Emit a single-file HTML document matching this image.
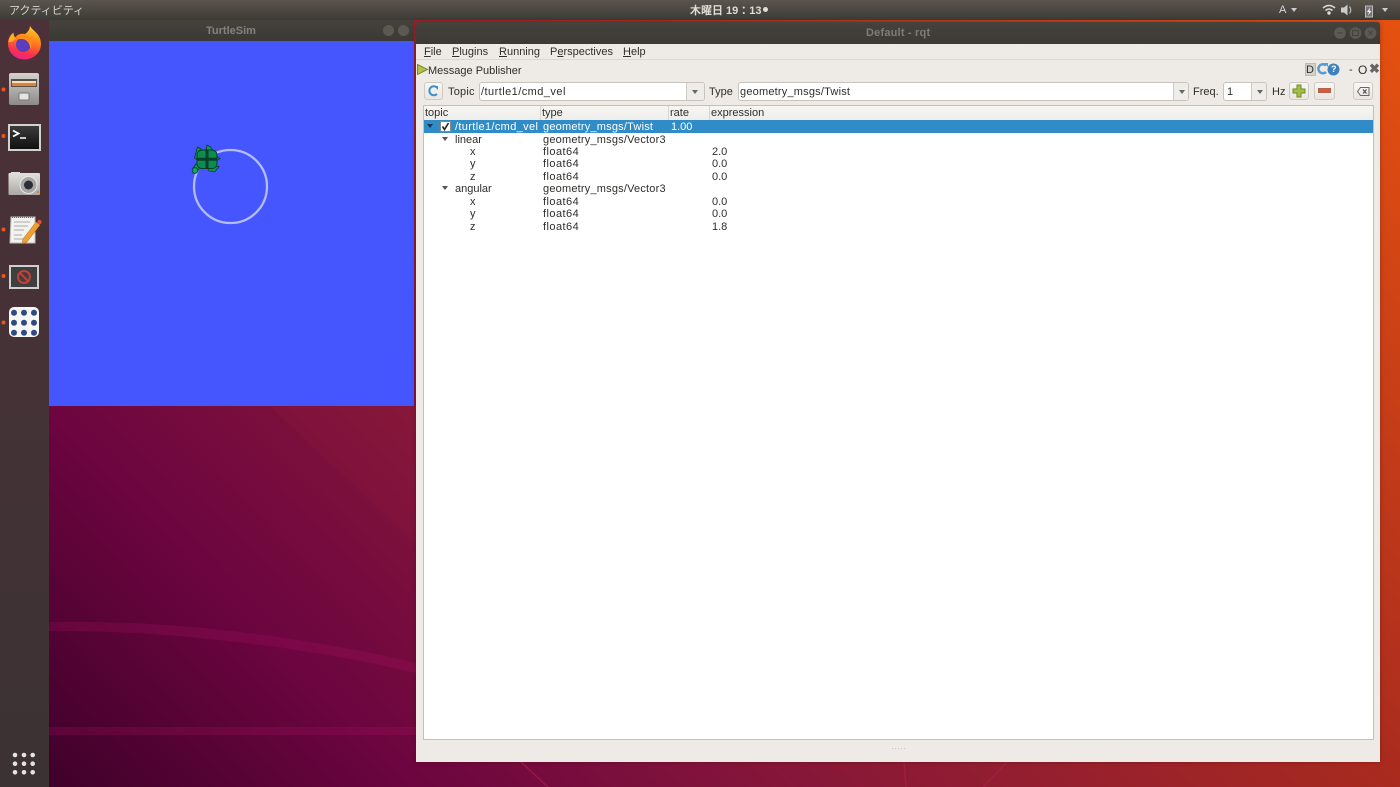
<!DOCTYPE html>
<html lang="ja"><head><meta charset="utf-8"><title>TurtleSim - rqt</title>
<style>
html,body{margin:0;padding:0;width:1400px;height:787px;overflow:hidden;background:#6a063f}
body{position:relative;font-family:"Liberation Sans","Noto Sans CJK JP",sans-serif;font-size:11px;color:#2e2e2b}
#r{position:absolute;left:0;top:0;width:1400px;height:787px;filter:blur(.3px)}
.a,.t{position:absolute}
.t{white-space:nowrap;line-height:13px}
svg{position:absolute;overflow:visible}
.btn{position:absolute;box-sizing:border-box;border:1px solid #cfcac3;border-radius:3px;background:linear-gradient(#f8f7f5,#e9e6e1)}
.inp{position:absolute;box-sizing:border-box;border:1px solid #c8c3bc;border-radius:3px;background:#fff;height:19px}
.dd{position:absolute;right:0;top:0;bottom:0;width:17px;border-left:1px solid #cfcac3;background:#efedea;border-radius:0 2px 2px 0}
.dd:after{content:"";position:absolute;left:5px;top:7px;border:3.5px solid transparent;border-top:4px solid #666;border-bottom:0}
.tri{position:absolute;border:3.5px solid transparent;border-top:4px solid #555;border-bottom:0}
.u{text-decoration:underline}
.f{letter-spacing:.45px}
.g{letter-spacing:.2px}
</style></head><body><div id="r">
<svg width="1400" height="787" style="left:0;top:0">
<defs>
<linearGradient id="bg" gradientUnits="userSpaceOnUse" x1="49" y1="787" x2="1146" y2="-278">
<stop offset="0" stop-color="#3f0129"/><stop offset=".172" stop-color="#6c0540"/><stop offset=".345" stop-color="#85163a"/><stop offset=".63" stop-color="#a82a1f"/><stop offset="1" stop-color="#e8530f"/>
</linearGradient>
</defs>
<rect width="1400" height="787" fill="url(#bg)"/>
<path d="M49 622C180 619 320 640 416 663V673C320 650 180 630 49 631Z" fill="#b01268" opacity=".22"/>
<path d="M49 727H416V735H49Z" fill="#b01268" opacity=".22"/>
<path d="M270 406H416V545Z" fill="#a0283c" opacity=".1"/>
<path d="M904 762L906 787M1007 762L983 787M521 762L548 787" stroke="#a62048" stroke-width="1.500" fill="none" opacity=".7"/>
</svg>

<!-- top bar -->
<div class="a" style="left:0;top:0;width:1400px;height:20px;background:linear-gradient(#5a554d,#3d3b36)"></div>
<div class="t" style="left:9px;top:5px;color:#d6d4ce;font-size:11px">アクティビティ</div>
<div class="t" style="left:690px;top:5px;color:#dedcd6;font-size:11px;font-weight:bold">木曜日 19：13</div>
<div class="a" style="left:763px;top:7px;width:5px;height:5px;border-radius:50%;background:#ddd"></div>
<div class="t" style="left:1279px;top:4px;color:#d8d8d8;font-size:11px">A</div>
<div class="tri" style="left:1291px;top:8px;border-top-color:#ccc"></div>
<svg style="left:1322px;top:4px" width="60" height="14">
<path d="M1 4Q7 -1 13 4M3.500 6.500Q7 3.500 10.500 6.500" stroke="#ddd" stroke-width="1.500" fill="none"/><circle cx="7" cy="9" r="1.700" fill="#ddd"/>
<path d="M19 3.500H22L25.500 .5V11.500L22 8.500H19Z" fill="#ccc"/><path d="M27.500 2.500Q30 6 27.500 9.500" stroke="#bbb" stroke-width="1.200" fill="none"/>
<path d="M43.500 2H50.500V13H43.500Z" fill="#777" stroke="#bbb"/><path d="M48 3.500L45 8H47L46 11.500L49.500 7H47.500Z" fill="#eee"/>
</svg>
<div class="tri" style="left:1382px;top:8px;border-top-color:#ccc"></div>

<!-- dock -->
<div class="a" style="left:0;top:20px;width:49px;height:767px;background:linear-gradient(#4c3138,#3b3234)"></div>
<svg style="left:0;top:20px" width="49" height="767">
<defs>
<linearGradient id="ff" x1=".7" y1="0" x2=".4" y2="1"><stop offset="0" stop-color="#ffd31f"/><stop offset=".45" stop-color="#ff7a1c"/><stop offset=".8" stop-color="#f8304e"/><stop offset="1" stop-color="#e8258c"/></linearGradient>
<linearGradient id="drw" x1="0" y1="0" x2="0" y2="1"><stop offset="0" stop-color="#d4d2ce"/><stop offset="1" stop-color="#8d8b87"/></linearGradient>
<linearGradient id="trm" x1="0" y1="0" x2="0" y2="1"><stop offset="0" stop-color="#3c3c3c"/><stop offset="1" stop-color="#101010"/></linearGradient>
<linearGradient id="cam" x1="0" y1="0" x2="0" y2="1"><stop offset="0" stop-color="#e2e1de"/><stop offset="1" stop-color="#aaa8a4"/></linearGradient>
</defs>
<!-- firefox -->
<path d="M30 5.500C31 10 41 13 41 24C41 33 33 39.500 24.500 39.500C15 39.500 8 32.500 8 23.500C8 20 9 15.500 13.500 12.500C13.500 14.500 14 16 15 17.500C17 14.500 21 13 25 14C28 12 30 9 30 5.500Z" fill="url(#ff)"/>
<path d="M8.500 22C9 18 11 15 13.500 13C13.500 15 14.500 17.500 16 18.500C14.500 20 11 23 8.500 22Z" fill="#ffb020"/>
<circle cx="23.500" cy="24.500" r="7.500" fill="#5b3dc0"/>
<path d="M16 20C19 14.500 27 14 31 19.500C32.500 22 32 27 30 29C30.500 25 28 21 24.500 19.500C21.500 18.500 18.500 19 16 20Z" fill="#ff8a1a"/>
<!-- files -->
<rect x="9" y="53" width="30" height="32" rx="2" fill="url(#drw)"/>
<rect x="11" y="59" width="26" height="8" fill="#55504a"/><rect x="12" y="61" width="24" height="2" fill="#f6e0b8"/><rect x="12" y="63" width="24" height="3" fill="#e0803a"/>
<rect x="19" y="73" width="10" height="7" rx="1" fill="#e4e4e2" stroke="#777"/>
<!-- terminal -->
<rect x="8" y="104" width="33" height="27" fill="#d2d2d0"/><rect x="10" y="106" width="29" height="23" fill="url(#trm)"/>
<path d="M13 110.500L18.500 113.500L13 116.500" stroke="#fff" stroke-width="1.800" fill="none"/><path d="M20 118H26" stroke="#fff" stroke-width="1.500"/>
<!-- camera -->
<rect x="8.500" y="153" width="31.500" height="22" rx="1" fill="url(#cam)"/><rect x="11" y="152" width="9" height="3" fill="#ddd"/>
<circle cx="28.500" cy="165" r="8.500" fill="#a8a6a2" stroke="#e8e8e6"/><circle cx="28.500" cy="165" r="4.500" fill="#2b2f3a"/><rect x="37" y="171" width="2" height="2" fill="#e8802a"/>
<!-- editor -->
<path d="M11 197H35V223H10Z" fill="#f3f2ee" stroke="#bdbbb6"/><path d="M12 197H34" stroke="#777" stroke-dasharray="1 1" stroke-width="2"/>
<path d="M14 202H30M14 206H28M14 210H24M14 215H22M14 219H23" stroke="#aaa"/>
<path d="M23 219L36 202L40 205L27 222L22 224Z" fill="#f0a030" stroke="#a36a20" stroke-width=".5"/><circle cx="39.500" cy="202" r="2.200" fill="#d8503a"/>
<!-- no-sign -->
<rect x="9" y="245" width="30" height="24" fill="#cfcfcd"/><rect x="11" y="247" width="26" height="20" fill="#3f3f3f"/>
<circle cx="24" cy="257" r="6" fill="none" stroke="#c24138" stroke-width="2"/><path d="M20 253L28 261" stroke="#c24138" stroke-width="2"/>
<!-- grid app -->
<rect x="9" y="287" width="30" height="30" rx="5" fill="#f6f6f4"/>
<g fill="#2f4a80"><circle cx="14" cy="292.700" r="3"/><circle cx="24" cy="292.700" r="3"/><circle cx="34" cy="292.700" r="3"/><circle cx="14" cy="302.700" r="3"/><circle cx="24" cy="302.700" r="3"/><circle cx="34" cy="302.700" r="3"/><circle cx="14" cy="312.700" r="3"/><circle cx="24" cy="312.700" r="3"/><circle cx="34" cy="312.700" r="3"/></g>
<!-- running dots -->
<g fill="#e9541f"><circle cx="3.500" cy="69.500" r="2"/><circle cx="3.500" cy="116" r="2"/><circle cx="3.500" cy="209.500" r="2"/><circle cx="3.500" cy="256" r="2"/><circle cx="3.500" cy="302.500" r="2"/></g>
<!-- show apps -->
<g fill="#e6e4e2"><circle cx="15" cy="735" r="2.300"/><circle cx="24" cy="735" r="2.300"/><circle cx="32.700" cy="735" r="2.300"/><circle cx="15" cy="743.700" r="2.300"/><circle cx="24" cy="743.700" r="2.300"/><circle cx="32.700" cy="743.700" r="2.300"/><circle cx="15" cy="752.300" r="2.300"/><circle cx="24" cy="752.300" r="2.300"/><circle cx="32.700" cy="752.300" r="2.300"/></g>
</svg>

<!-- turtlesim window -->
<div class="a" style="left:49px;top:20px;width:365px;height:21px;background:linear-gradient(#45423c,#3b3935)"></div>
<div class="t" style="left:206px;top:25px;color:#85827c;font-weight:bold;font-size:11px">TurtleSim</div>
<div class="a" style="left:383px;top:25px;width:11px;height:11px;border-radius:50%;background:#5b5952"></div>
<div class="a" style="left:398px;top:25px;width:11px;height:11px;border-radius:50%;background:#5b5952"></div>
<div class="a" style="left:49px;top:41px;width:365px;height:365px;background:#4556ff"></div>
<svg style="left:170px;top:130px" width="110" height="100">
<circle cx="60.500" cy="56.500" r="36.500" fill="none" stroke="#b4bcf8" stroke-width="2.300"/>
<path d="M24.500 28L27.500 17L31 19L30 31Z" fill="#0e9a58" stroke="#063a24" stroke-width=".8"/>
<path d="M36 20L37 15L40.500 17L43 21Z" fill="#0e9a58" stroke="#063a24" stroke-width=".8"/>
<path d="M37 37L49 36.500L45 41.500L39 41Z" fill="#0e9a58" stroke="#063a24" stroke-width=".8"/>
<path d="M46 26L50 28.500L46 31Z" fill="#0e9a58" stroke="#063a24" stroke-width=".8"/>
<path d="M26 34L31 36L27 42L23 43L23 38Z" fill="#0e9a58" stroke="#063a24" stroke-width=".8"/>
<circle cx="25" cy="40.500" r="2.800" fill="#12a860" stroke="#063a24" stroke-width=".8"/>
<rect x="27" y="20" width="20" height="18.500" rx="5" fill="#0d8c50" stroke="#063a24" stroke-width=".9"/>
<path d="M37 20V38.500M27 29.200H47" stroke="#06402a" stroke-width="3"/>
</svg>

<!-- rqt window -->
<div class="a" style="left:416px;top:22px;width:964px;height:740px;box-shadow:0 0 4px rgba(60,0,10,.35);border-radius:3px 3px 0 0"></div>
<div class="a" style="left:416px;top:22px;width:964px;height:22px;background:linear-gradient(#45423c,#3c3a35);border-radius:3px 3px 0 0"></div>
<div class="t" style="left:866px;top:27px;color:#7f7c76;font-weight:bold;font-size:11px;letter-spacing:.2px">Default - rqt</div>
<svg style="left:1334px;top:26px" width="44" height="14">
<circle cx="6" cy="7" r="5.800" fill="#5c5a54"/><circle cx="21.500" cy="7" r="5.800" fill="#5c5a54"/><circle cx="36.500" cy="7" r="5.800" fill="#5c5a54"/>
<path d="M3.500 7H8.500M18.500 4.500H24.500V9.500H18.500ZM34.500 5L38.500 9M38.500 5L34.500 9" stroke="#45433e" stroke-width="1.200" fill="none"/>
</svg>
<div class="a" style="left:416px;top:44px;width:964px;height:718px;background:#eeebe6"></div>
<div class="a" style="left:416px;top:59px;width:964px;height:1px;background:#dad6d0"></div>

<div class="t" style="left:424px;top:46px"><span class="u">F</span>ile</div>
<div class="t" style="left:452px;top:46px"><span class="u">P</span>lugins</div>
<div class="t" style="left:499px;top:46px"><span class="u">R</span>unning</div>
<div class="t" style="left:550px;top:46px">P<span class="u">e</span>rspectives</div>
<div class="t" style="left:623px;top:46px"><span class="u">H</span>elp</div>

<svg style="left:417px;top:64px" width="12" height="12"><path d="M.5 .5L10.500 5.500L.5 10.500Z" fill="#b5c24a" stroke="#7b8a2a"/></svg>
<div class="t" style="left:428px;top:65px;">Message Publisher</div>

<div class="a" style="left:1305px;top:63px;width:11px;height:13px;background:#d4d1cb;border:1px solid #bbb;box-sizing:border-box"></div>
<div class="t" style="left:1306px;top:64px">D</div>
<svg style="left:1316px;top:62px" width="26" height="15">
<path d="M10 3.500A4.500 4.500 0 1 0 10 10" stroke="#5b9bd5" stroke-width="2.500" fill="none"/><path d="M8 1H12V5Z" fill="#5b9bd5"/>
<circle cx="17.500" cy="7.500" r="6" fill="#3f80bf"/></svg>
<div class="t" style="left:1331px;top:63px;color:#fff;font-weight:bold;font-size:9px">?</div>
<div class="t" style="left:1349px;top:64px">-</div>
<div class="t" style="left:1358px;top:64px;font-size:12px">O</div>
<div class="t" style="left:1369px;top:62px;color:#666;font-weight:bold;font-size:13px">✖</div>

<div class="btn" style="left:424px;top:82px;width:19px;height:18px"></div>
<svg style="left:427px;top:85px" width="13" height="12"><path d="M10 2.500A4.500 4.500 0 1 0 10 9" stroke="#3f8fc9" stroke-width="2" fill="none"/><path d="M7 1H11V5Z" fill="#3f8fc9"/></svg>
<div class="t g" style="left:448px;top:86px">Topic</div>
<div class="inp" style="left:479px;top:82px;width:226px"><div class="t" style="left:1px;top:3px;letter-spacing:.45px">/turtle1/cmd_vel</div><div class="dd"></div></div>
<div class="t" style="left:709px;top:86px">Type</div>
<div class="inp" style="left:738px;top:82px;width:451px"><div class="t g" style="left:1px;top:3px">geometry_msgs/Twist</div><div class="dd" style="width:14px"></div></div>
<div class="t" style="left:1193px;top:86px">Freq.</div>
<div class="inp" style="left:1223px;top:82px;width:44px"><div class="t" style="left:3px;top:3px">1</div><div class="dd" style="width:14px"></div></div>
<div class="t" style="left:1272px;top:86px">Hz</div>
<div class="btn" style="left:1289px;top:82px;width:20px;height:18px"></div>
<svg style="left:1292px;top:84px" width="14" height="14"><path d="M5 1H9V5H13V9H9V13H5V9H1V5H5Z" fill="#a5bf45" stroke="#6f8a28"/></svg>
<div class="btn" style="left:1314px;top:82px;width:21px;height:18px"></div>
<div class="a" style="left:1318px;top:88px;width:13px;height:5px;background:#d8583a;border:1px solid #b5634a;box-sizing:border-box"></div>
<div class="btn" style="left:1353px;top:82px;width:20px;height:18px"></div>
<svg style="left:1357px;top:87px" width="13" height="10"><path d="M3.500 .5H12V8.500H3.500L.5 4.500Z" fill="none" stroke="#666"/><path d="M6 2.500L9.500 6.500M9.500 2.500L6 6.500" stroke="#555" stroke-width="1.300"/></svg>

<!-- tree -->
<div class="a" style="left:423px;top:105px;width:951px;height:635px;background:#fff;border:1px solid #c4bfb8;box-sizing:border-box"></div>
<div class="a" style="left:424px;top:106px;width:949px;height:14px;background:linear-gradient(#f7f6f3,#efedea)"></div>
<div class="a" style="left:540px;top:106px;width:1px;height:14px;background:#d8d4ce"></div>
<div class="a" style="left:668px;top:106px;width:1px;height:14px;background:#d8d4ce"></div>
<div class="a" style="left:709px;top:106px;width:1px;height:14px;background:#d8d4ce"></div>
<div class="t" style="left:425px;top:107px">topic</div>
<div class="t" style="left:542px;top:107px">type</div>
<div class="t" style="left:670px;top:107px">rate</div>
<div class="t" style="left:711px;top:107px">expression</div>

<div class="a" style="left:424px;top:120px;width:949px;height:13px;background:#308cc6"></div>
<div class="tri" style="left:427px;top:124px;border-top-color:#123a55"></div>
<div class="a" style="left:440px;top:121px;width:11px;height:11px;box-sizing:border-box;background:#fff;border:1px solid #888"></div>
<svg style="left:441px;top:122px" width="9" height="9"><path d="M1.500 4.500L3.500 7.500L7.500 1" stroke="#222" stroke-width="1.600" fill="none"/></svg>
<div class="t" style="left:455px;top:121px;color:#fff;letter-spacing:.35px">/turtle1/cmd_vel</div>
<div class="t g" style="left:543px;top:121px;color:#fff">geometry_msgs/Twist</div>
<div class="t" style="left:671px;top:121px;color:#fff">1.00</div>

<div class="tri" style="left:442px;top:137px"></div>
<div class="t" style="left:455px;top:134px">linear</div><div class="t g" style="left:543px;top:134px">geometry_msgs/Vector3</div>
<div class="t" style="left:470px;top:146px">x</div><div class="t f" style="left:543px;top:146px">float64</div><div class="t" style="left:712px;top:146px">2.0</div>
<div class="t" style="left:470px;top:158px">y</div><div class="t f" style="left:543px;top:158px">float64</div><div class="t" style="left:712px;top:158px">0.0</div>
<div class="t" style="left:470px;top:171px">z</div><div class="t f" style="left:543px;top:171px">float64</div><div class="t" style="left:712px;top:171px">0.0</div>
<div class="tri" style="left:442px;top:186px"></div>
<div class="t" style="left:455px;top:183px">angular</div><div class="t g" style="left:543px;top:183px">geometry_msgs/Vector3</div>
<div class="t" style="left:470px;top:196px">x</div><div class="t f" style="left:543px;top:196px">float64</div><div class="t" style="left:712px;top:196px">0.0</div>
<div class="t" style="left:470px;top:208px">y</div><div class="t f" style="left:543px;top:208px">float64</div><div class="t" style="left:712px;top:208px">0.0</div>
<div class="t" style="left:470px;top:221px">z</div><div class="t f" style="left:543px;top:221px">float64</div><div class="t" style="left:712px;top:221px">1.8</div>

<div class="a" style="left:892px;top:748px;width:14px;height:1px;background:repeating-linear-gradient(90deg,#c8c5c0 0 1px,transparent 1px 3px)"></div>
</div></body></html>
